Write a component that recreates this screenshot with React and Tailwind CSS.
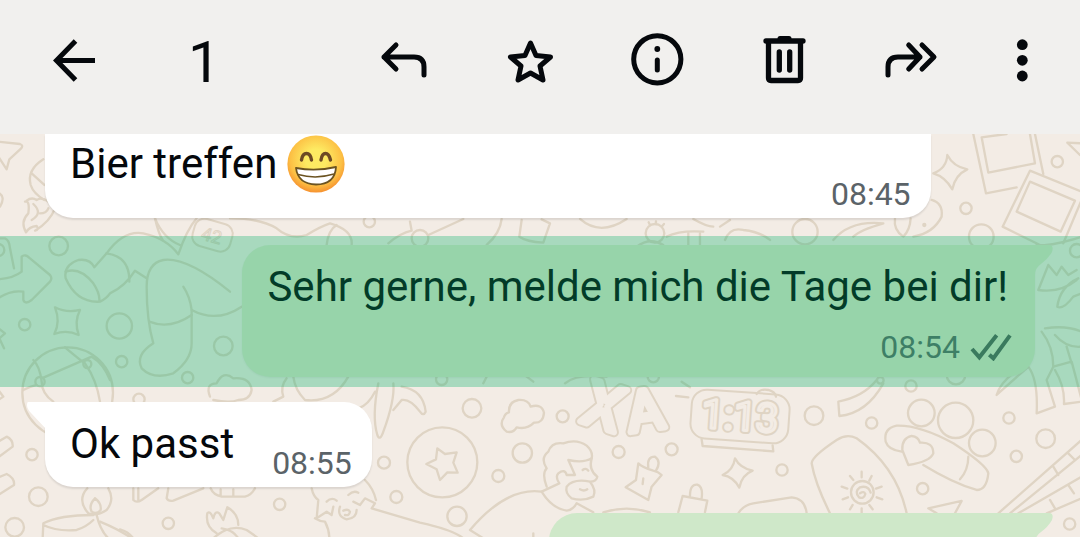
import React from "react";

const DOODLES = [
  {
    at: "translate(0 0) scale(0.3333)",
    circles: [],
    paths: [
      "M-5 425L60 432Q72 436 62 447L28 478L20 508L-5 470",
      "M130 478Q80 510 92 555Q100 580 133 600M95 520L133 555",
      "M-5 578Q18 590 0 620",
      "M80 602Q95 590 110 600Q125 590 145 605M75 605Q90 600 85 640Q60 665 78 697Q88 680 110 678Q118 690 105 692Q150 665 165 625",
      "M100 612Q130 640 95 660M120 640Q140 640 145 625",
      "M465 655Q475 700 488 720",
    ],
  },
  {
    at: "translate(0 220) scale(0.3333)",
    circles: [
      [176, 78, 28], [74, 314, 17], [358, 318, 38], [365, 425, 17], [670, 378, 28], [563, 473, 17],
      [417, 538, 17], [96, 704, 17], [115, 830, 28], [44, 922, 28], [505, 910, 17], [839, 853, 17],
      [-5, 90, 18], [203, 518, 136], [120, 485, 14], [262, 432, 12],
    ],
    paths: [
      "M320 100Q370 30 430 40Q500 55 535 103Q560 30 590 -5M465 -5Q490 55 540 75",
      "M320 100L283 142Q270 115 235 120Q190 135 197 175Q230 250 300 245Q320 235 330 220Q375 200 405 152L440 175",
      "M320 100Q390 110 388 185M197 155Q240 140 280 190Q300 220 298 243",
      "M690 215Q560 110 490 120Q440 130 440 200Q440 300 460 370Q405 405 425 445Q460 480 520 460Q575 420 575 370V270Q570 230 550 200",
      "M448 305Q510 330 575 285M575 270Q650 310 725 260",
      "M690 -5Q780 -5 830 25Q870 60 920 45Q960 20 990 10Q1060 30 1055 75M980 75Q985 30 1010 15",
      "M-5 178Q40 175 65 155V110Q75 100 90 115L150 165Q158 175 150 185L95 240Q75 255 70 240V215Q30 210 -5 235",
      "M-5 55H15Q28 60 30 85L42 145",
      "M165 262Q200 280 240 270Q222 305 236 345Q200 328 163 342Q182 305 165 262Z",
      "M-5 325L15 340L-2 355L12 385",
      "M100 420Q120 440 125 485Q125 520 160 545M125 475L275 410Q310 430 330 480M195 382Q240 420 255 430Q290 480 300 545M70 510Q90 500 110 495",
      "M630 530Q615 490 650 490Q670 450 700 475Q750 470 755 510Q750 540 715 540Q690 550 640 540",
      "M880 470Q885 510 915 540Q1000 550 1045 470M860 475Q840 500 850 530Q830 540 820 545",
      "M-5 665L20 650Q40 660 38 680L-5 712M-5 772L20 762Q45 775 42 795L-5 825M-5 510L10 530L-5 540",
      "M262 805Q230 840 265 880Q290 890 320 870Q345 840 325 805M285 835Q265 855 275 875Q290 885 302 870Q305 850 285 835",
      "M280 885Q180 885 130 910L128 955M130 915Q170 935 230 930Q260 920 280 900M290 885Q300 930 325 955M300 905Q360 930 395 955",
      "M400 805V840Q410 850 425 840L475 805M415 805V840M505 805L500 835Q505 845 520 842L610 805",
      "M632 805Q640 825 665 830H735Q755 825 765 805M662 808V828M700 808V828",
      "M650 940Q615 920 622 880Q630 870 640 895Q645 870 658 880L670 900L682 862Q715 880 715 915",
      "M640 955Q690 910 740 930Q770 950 780 960M665 925Q700 930 715 955",
    ],
  },
  {
    at: "translate(120 480) scale(0.3333)",
    circles: [],
    paths: [
      "M575 25Q580 50 595 60L590 115L620 95L635 105L640 80M585 115Q600 125 615 125Q628 150 628 175",
      "M620 65Q635 50 650 62M685 45Q700 30 715 38M660 80Q650 110 680 118Q710 115 710 90M670 92Q685 85 690 95Q688 108 675 105",
      "M700 65L720 75L735 55L765 70L755 85L900 128Q1000 150 1030 175M735 0Q760 25 768 60M0 148Q25 155 40 175",
    ],
  },
  {
    at: "translate(360 380) scale(0.3333)",
    circles: [
      [336, 85, 28], [608, 109, 18], [247, 247, 105], [487, 219, 29], [72, 248, 18], [415, 288, 18],
      [109, 351, 18], [291, 409, 29], [776, 216, 18], [935, 208, 18],
    ],
    paths: [
      "M232 205L255 222L290 217L280 248L293 278L262 277L240 300L230 268L199 252L228 238Z",
      "M470 142Q460 160 440 155Q415 135 432 112Q435 100 447 97Q445 65 475 60Q505 58 512 80Q545 70 552 98Q550 130 522 128Q500 150 470 142Z",
      "M100 10Q105 60 70 155Q60 185 52 165Q35 110 55 10M-5 85Q25 75 45 35M125 20Q190 30 197 95Q190 110 180 95Q150 55 125 60L100 90",
      "M545 335Q440 320 330 450L370 475M520 460V475",
      "M560 320Q545 280 560 265Q540 235 565 215Q575 185 610 190Q650 175 680 197Q700 215 695 235Q670 250 625 240L645 285H620Q615 265 595 280Q585 290 598 310L545 335Q575 385 620 392Q640 390 650 370L700 397",
      "M695 235Q685 270 712 290Q710 305 690 305M620 320Q640 295 690 305Q710 330 700 350Q670 365 635 355Q615 340 620 320M660 328Q672 335 682 328M668 270Q678 262 685 272",
      "M730 397Q800 375 870 397",
      "M835 250Q845 262 880 272Q895 275 905 285L875 320L865 360L797 322L828 300ZM865 262Q860 230 885 230Q905 245 888 272M850 295L848 312",
      "M955 397L968 348L1042 362L1035 397M990 348Q990 312 1012 314Q1030 320 1025 355",
      "M948 48L985 52M965 5L990 22M1025 178L1028 198L1240 214L1238 196",
    ],
  },
  {
    at: "translate(360 210) scale(0.3333)",
    circles: [[28, 35, 17], [180, 85, 25], [885, 70, 28], [245, 508, 17], [880, 500, 17]],
    paths: [
      "M85 100Q120 70 155 62L150 35M205 75L310 27M425 27Q420 70 380 105M485 30L478 80Q500 95 550 98L570 40L545 28",
      "M660 27Q720 80 800 27M870 45L866 37M888 42V34M905 50L912 42M830 110Q870 80 910 105M920 80Q960 60 1030 65M985 70V105M1020 70V105M1000 27Q1040 50 1060 50",
      "M370 520L380 500M500 500L520 515M615 520Q650 490 740 500",
    ],
  },
  {
    at: "translate(720 0) scale(0.3333)",
    circles: [[1012, 485, 17], [738, 625, 17], [613, 675, 3]],
    paths: [
      "M760 402L798 580L890 562M945 402L970 522M785 412L805 518L945 490L930 402M785 412L860 402",
      "M930 512L1085 575M930 512L848 680L960 735M930 545L1065 602L1022 695L890 635ZM1085 600L1030 730",
      "M1085 430L1042 428L1080 465",
      "M682 465Q700 500 742 508Q705 525 697 568Q675 530 640 520Q680 505 682 465Z",
      "M635 600Q670 610 665 650Q640 700 580 710M525 655Q520 690 550 710Q570 690 572 655",
      "M15 720Q30 680 70 690Q120 695 150 720M0 680L30 660M340 720Q390 660 490 670Q420 690 400 710",
    ],
  },
  {
    at: "translate(720 220) scale(0.3333)",
    circles: [
      [255, 35, 38], [784, 50, 37], [282, 587, 28], [455, 609, 17], [573, 498, 17], [604, 579, 40],
      [707, 601, 53], [787, 669, 40], [867, 594, 17], [977, 656, 28], [889, 709, 17], [186, 750, 17],
      [608, 806, 17], [1049, 912, 17], [1070, 92, 20], [481, 481, 10], [427, 817, 34], [708, 465, 28],
    ],
    paths: [
      "M950 75Q990 80 1085 50",
      "M985 135L1010 165L1025 140L1045 165L1070 150M985 135L955 210Q1020 220 1070 180M1075 175Q1020 200 1012 260Q1030 270 1060 230L1085 220",
      "M965 335Q1000 380 1000 440L980 480L1005 560L950 580Q955 480 925 440L830 525Q840 490 880 460M975 325Q1040 315 1085 335M1005 345Q1040 385 1085 380",
      "M1000 440L1055 425Q1070 480 1085 540M1040 380L1055 430M1085 545L1032 552Q1035 500 1005 450",
      "M470 480Q430 530 355 545L358 588Q440 580 490 490",
      "M110 522Q120 505 145 510Q165 515 168 530",
      "M330 880Q285 790 275 730Q275 710 350 660Q380 640 410 655Q530 740 560 880",
      "M420 820Q432 812 436 822Q432 838 417 832Q402 815 420 802Q445 795 452 818",
      "M425 755V772M455 768L448 782M485 800L468 806M487 838L470 832M458 868L448 855M425 865V880M390 868L398 855M368 838L384 832M365 800L382 806M390 768L400 780",
      "M545 695Q505 690 497 665Q490 625 530 617Q600 615 700 670Q800 735 805 760Q800 810 770 810Q700 790 610 735M745 710Q745 750 720 778",
      "M565 735L547 690Q545 655 575 648Q595 650 600 668Q640 665 640 700Q630 725 565 735Z",
      "M1085 660L835 880M1085 705L870 880M1085 770L895 880M1085 835L980 880M1000 740L1015 765M1045 700L1065 720M990 840L1005 865M1045 795L1062 820",
      "M45 715Q60 745 98 752Q65 765 58 803Q40 770 8 765Q40 750 45 715Z",
      "M55 880Q70 855 100 850L215 832Q255 835 260 880M650 880L625 865L725 843L705 880",
    ],
  },
];

const LETTERS = [
  { text: "X", x: 604, y: 428, size: 62, turn: "rotate(18 604 405)", outer: 10, inner: 6 },
  { text: "A", x: 645, y: 430, size: 56, turn: "rotate(-8 645 410)", outer: 10, inner: 6 },
  { text: "1:13", x: 740, y: 430, size: 40, turn: "rotate(4 740 417)", outer: 7, inner: 3 },
];

function Wallpaper() {
  return (
    <svg
      aria-hidden="true"
      viewBox="0 0 1080 537"
      preserveAspectRatio="xMidYMin slice"
      className="absolute inset-0 h-full w-full"
      fill="none"
      stroke="#dfd4c4"
      strokeLinecap="round"
      strokeLinejoin="round"
    >
      {DOODLES.map((group) => (
        <g key={group.at} transform={group.at} strokeWidth="7">
          {group.circles.map(([cx, cy, r]) => (
            <circle key={`${cx}-${cy}`} cx={cx} cy={cy} r={r} />
          ))}
          {group.paths.map((d) => (
            <path key={d} d={d} />
          ))}
        </g>
      ))}
      <g transform="rotate(16 212 235)" strokeWidth="2">
        <rect x="193" y="221" width="39" height="28" rx="10" />
        <text x="212" y="242" fontSize="18" textAnchor="middle" strokeWidth="1" className="font-[Roboto]">42</text>
      </g>
      <rect x="691" y="392" width="98" height="49" rx="15" strokeWidth="2" transform="rotate(4 740 417)" />
      {LETTERS.map((l) => (
        <g key={l.text} transform={l.turn} fontSize={l.size} textAnchor="middle" className="font-[Roboto]">
          <text x={l.x} y={l.y} strokeWidth={l.outer}>{l.text}</text>
          <text x={l.x} y={l.y} strokeWidth={l.inner} stroke="#f3ece5">{l.text}</text>
        </g>
      ))}
    </svg>
  );
}

function IconButton({ label, className = "w-16", viewBox = "0 0 64 64", children }) {
  return (
    <button type="button" aria-label={label} className={`h-16 shrink-0 ${className}`}>
      <svg
        viewBox={viewBox}
        className="h-full w-full"
        fill="none"
        stroke="currentColor"
        strokeWidth="5"
        strokeLinecap="round"
        strokeLinejoin="round"
      >
        {children}
      </svg>
    </button>
  );
}

function Toolbar() {
  return (
    <header className="relative z-10 flex items-center bg-[#f1f0ee] px-[42px] pt-7 pb-[42px] text-[#05080c]">
      <IconButton label="Zurück">
        <path d="M33.5 13L14.500 32.5L33.5 52M14.500 32.5H53" strokeLinecap="butt" strokeLinejoin="miter" />
      </IconButton>
      <span className="ml-[82px] pt-1 text-[58px] leading-15">1</span>
      <div className="ml-auto flex gap-[63px]">
        <IconButton label="Antworten">
          <path d="M25 17L13 29L25 41M13 29H43Q53 29 53 39V47" />
        </IconButton>
        <IconButton label="Markieren">
          <path d="M32.5 15L38 27.5L52.5 29L42 38L45 52L32.5 45L20 52L23 38L12.5 29L27 27.5Z" />
        </IconButton>
        <IconButton label="Info">
          <circle cx="32.3" cy="31.3" r="23.6" />
          <circle cx="32.3" cy="21" r="2.9" fill="currentColor" stroke="none" />
          <path d="M32.3 32V42" />
        </IconButton>
        <IconButton label="Löschen">
          <path d="M14 13H51M16.5 14V50Q16.5 52.5 19 52.5H46Q48.5 52.5 48.5 50V14M27.3 24V42M37.7 24V42" strokeWidth="5.300" />
          <path d="M28 10.5H37" />
        </IconButton>
        <IconButton label="Weiterleiten">
          <path d="M29.7 17L41 29L29.7 41M43 17L55 29L43 41M41 29H19Q9 29 9 39V47" />
        </IconButton>
        <IconButton label="Weitere Optionen" className="w-8" viewBox="0 0 32 64">
          <g fill="currentColor" stroke="none">
            <circle cx="16.3" cy="16.7" r="5.4" />
            <circle cx="16.3" cy="32.3" r="5.4" />
            <circle cx="16.3" cy="48" r="5.4" />
          </g>
        </IconButton>
      </div>
    </header>
  );
}

function GrinEmoji() {
  return (
    <svg viewBox="0 0 58 58" role="img" aria-label="😁" className="ml-[10px] h-[58px] w-[58px] shrink-0">
      <defs>
        <radialGradient id="face" cx="0.5" cy="0.42" r="0.6">
          <stop offset="0.3" stopColor="#fdea62" />
          <stop offset="0.75" stopColor="#fcc044" />
          <stop offset="1" stopColor="#f58a2c" />
        </radialGradient>
      </defs>
      <circle cx="29" cy="29" r="28.6" fill="url(#face)" />
      <path d="M14.500 25Q15.500 18.500 19.500 18.500T24.500 25M34 25Q35 18.500 38.500 18.500T43.500 25" fill="none" stroke="#6d4a24" strokeWidth="3.400" strokeLinecap="round" />
      <path d="M9 33Q29 36.500 49 32Q48 49.500 29 49.500Q11 49 9 33Z" fill="#fff" stroke="#6b5321" strokeWidth="1.800" strokeLinejoin="round" />
      <path d="M11 39.500Q29 44.500 47 39" fill="none" stroke="#6b5321" strokeWidth="1.500" />
    </svg>
  );
}

function Ticks() {
  return (
    <svg viewBox="29 6 126 84" className="ml-[10px] h-7 w-[42px]" fill="none" stroke="#54635a" strokeWidth="12" role="img" aria-label="Zugestellt">
      <path d="M35 54L57 79L109 13M87 71L99 82L149 13" />
    </svg>
  );
}

function Tail({ side, className }) {
  return side === "left" ? (
    <svg viewBox="0 0 20 30" className={`absolute top-0 -left-[18px] h-[30px] w-5 ${className}`} fill="currentColor">
      <path d="M20 0H1Q0 0 0 3Q0 7 4 11L20 28Z" />
    </svg>
  ) : (
    <svg viewBox="0 0 20 30" className={`absolute top-0 -right-[18px] h-[30px] w-5 ${className}`} fill="currentColor">
      <path d="M0 0H17Q21 1 19 7Q15 14 8 19Q2 23 2 30H0Z" />
    </svg>
  );
}

const bubbleBase = "relative rounded-[28px] pl-[25px]";
const shadow = "shadow-[0_2px_2px_rgba(0,0,0,0.1)]";
const textBase = "text-[42px] leading-14 whitespace-nowrap";
const timeBase = "text-[32px] leading-10";

export default function App() {
  return (
    <div className="relative flex h-screen flex-col overflow-hidden bg-[#f3ece5] font-[Roboto,sans-serif] text-[#05080c]">
      <Wallpaper />
      <Toolbar />
      <main className="relative flex flex-col">
        <div className={`${bubbleBase} ${shadow} ml-[45px] flex w-[82%] items-end justify-between rounded-t-none bg-white pt-px pr-5 pb-1`}>
          <p className={`${textBase} flex items-center pb-[21px]`}>
            Bier treffen
            <GrinEmoji />
          </p>
          <time className={`${timeBase} text-[#5b6368]`}>08:45</time>
        </div>

        <section className="relative mt-[18px] flex justify-end pt-[9px] pr-[45px] pb-[10px]">
          <div className={`${bubbleBase} rounded-tr-none bg-[#dbe5c9] pt-[14px] pr-[27px] pb-[10px] shadow-[0_1px_2px_rgba(0,0,0,0.05)]`}>
            <Tail side="right" className="text-[#dbe5c9]" />
            <p className={textBase}>Sehr gerne, melde mich die Tage bei dir!</p>
            <div className="mt-3 -mr-1 flex items-center justify-end text-[#5b6b66]">
              <time className={timeBase}>08:54</time>
              <Ticks />
            </div>
          </div>
          <div className="absolute inset-0 bg-[#00ae67]/31" />
        </section>

        <div className={`${bubbleBase} ${shadow} mt-[15px] ml-[45px] flex w-fit items-end rounded-tl-none bg-white pt-[14px] pr-5 pb-1`}>
          <Tail side="left" className="text-white" />
          <p className={`${textBase} pb-[11px]`}>Ok passt</p>
          <time className={`${timeBase} ml-[38px] text-[#5b6368]`}>08:55</time>
        </div>

        <div className={`${bubbleBase} mt-[26px] mr-[45px] w-[45%] self-end rounded-tr-none bg-[#cfe8c9] pt-[14px] pr-[27px] pb-[10px]`}>
          <Tail side="right" className="text-[#cfe8c9]" />
          <p className={textBase}>Super, bis dann</p>
        </div>
      </main>
    </div>
  );
}
